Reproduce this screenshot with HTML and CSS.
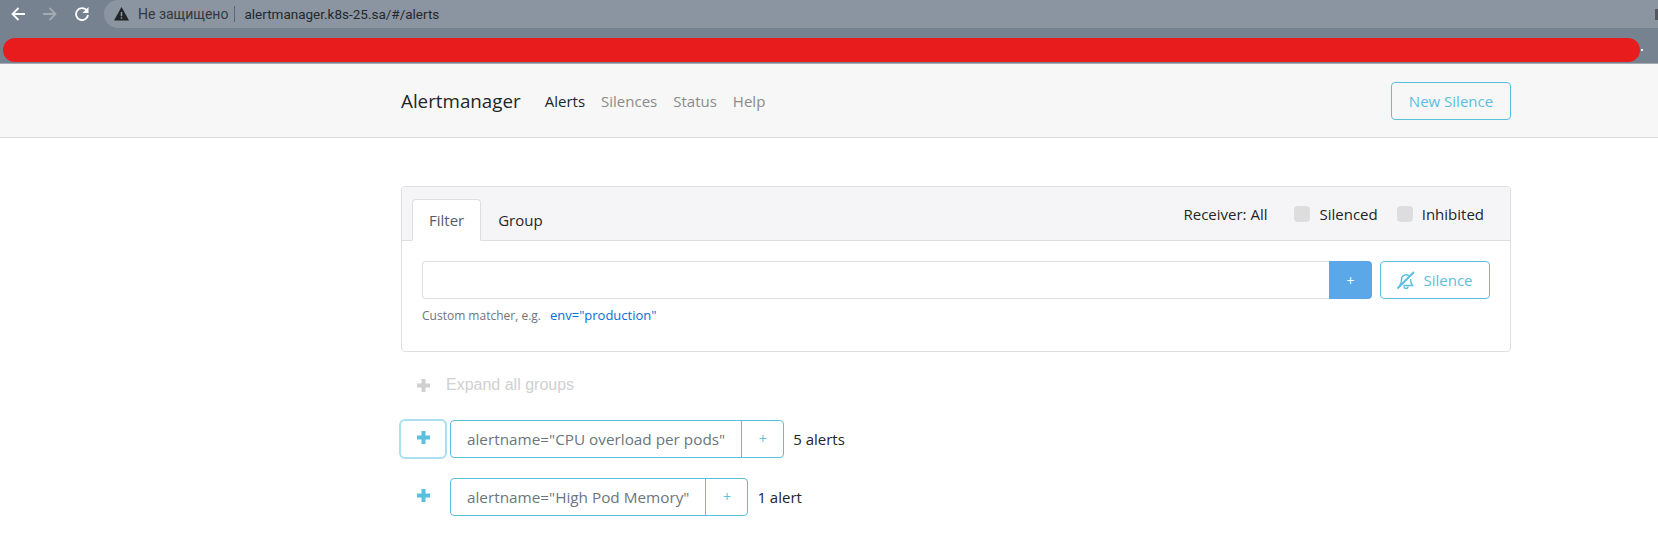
FILE: index.html
```html
<!DOCTYPE html>
<html lang="en">
<head>
  <meta charset="UTF-8" />
  <title>Alertmanager</title>
  <link rel="stylesheet" href="styles.css">
</head>
<body>
  <div class="chrome">
    <div class="chrome-top">
      <div class="chrome-nav">
        <svg class="chrome-icon" viewBox="0 0 14 14"><path d="M14 7H1.500M7.500 1L1.500 7l6 6" fill="none" stroke="#fff" stroke-width="1.800"/></svg>
        <svg class="chrome-icon" viewBox="0 0 14 14"><path d="M0 7h12.500M6.500 1l6 6-6 6" fill="none" stroke="#a3abb4" stroke-width="1.800"/></svg>
        <svg class="chrome-icon" viewBox="0 0 14 14"><path d="M11.600 3.200A6 6 0 1 0 13 8" fill="none" stroke="#fff" stroke-width="1.800"/><path d="M13.500 0v6H7.500z" fill="#fff"/></svg>
      </div>
      <div class="address">
        <svg class="warn" viewBox="0 0 15 14"><path d="M7.500 0l7.500 13.500H0z" fill="#202327"/><path d="M6.700 5h1.600v4.200H6.700zM6.700 10.200h1.600v1.500H6.700z" fill="#8b95a1"/></svg>
        <span class="not-secure">Не защищено</span>
        <span class="address-sep"></span>
        <span class="url">alertmanager.k8s-25.sa/#/alerts</span>
        <span class="ext-icon"></span>
      </div>
    </div>
    <div class="chrome-bookmarks">
      <div class="redacted"></div>
      <span class="redacted-dot"></span>
    </div>
  </div>

  <nav class="navbar">
    <div class="container navbar-inner">
      <span class="brand">Alertmanager</span>
      <a class="nav-link active">Alerts</a>
      <a class="nav-link">Silences</a>
      <a class="nav-link">Status</a>
      <a class="nav-link">Help</a>
      <button class="btn btn-outline new-silence">New Silence</button>
    </div>
  </nav>

  <main class="container content">
    <section class="card">
      <div class="card-header">
        <div class="tabs">
          <a class="tab active">Filter</a>
          <a class="tab">Group</a>
        </div>
        <div class="options">
          <span class="receiver">Receiver: All</span>
          <label class="check"><span class="check-box"></span>Silenced</label>
          <label class="check"><span class="check-box"></span>Inhibited</label>
        </div>
      </div>
      <div class="card-body">
        <div class="filter-row">
          <input class="filter-input" type="text" />
          <button class="btn-add">+</button>
          <button class="btn btn-outline silence-btn">
            <svg class="bell" viewBox="0 0 18 18"><path d="M2.500 14.500c1.500-1.500 2-3.500 2-6a4.500 4.500 0 0 1 7.500-3.500M13.500 8c0 3 .7 5 2 6.500H6.500M7 15.500a2 2 0 0 0 4 0" fill="none" stroke="#5bc0de" stroke-width="1.400"/><path d="M.5 17.500L17 1" fill="none" stroke="#5bc0de" stroke-width="2"/></svg>
            Silence
          </button>
        </div>
        <div class="hint">
          <span>Custom matcher, e.g.</span>
          <a class="hint-link">env="production"</a>
        </div>
      </div>
    </section>

    <div class="expand-all">
      <svg class="plus" viewBox="0 0 13 13"><path d="M6.500 0v13M0 6.500h13" stroke="currentColor" stroke-width="4"/></svg>
      <span class="expand-text">Expand all groups</span>
    </div>

    <div class="group">
      <button class="toggle focused"><svg class="plus" viewBox="0 0 13 13"><path d="M6.500 0v13M0 6.500h13" stroke="currentColor" stroke-width="4"/></svg></button>
      <div class="label-group">
        <span class="label-name">alertname="CPU overload per pods"</span>
        <span class="label-add">+</span>
      </div>
      <span class="count">5 alerts</span>
    </div>

    <div class="group">
      <button class="toggle"><svg class="plus" viewBox="0 0 13 13"><path d="M6.500 0v13M0 6.500h13" stroke="currentColor" stroke-width="4"/></svg></button>
      <div class="label-group">
        <span class="label-name">alertname="High Pod Memory"</span>
        <span class="label-add">+</span>
      </div>
      <span class="count">1 alert</span>
    </div>
  </main>
</body>
</html>
```
FILE: styles.css
```css
* {
  box-sizing: border-box;
}

body {
  margin: 0;
  font-family: "Open Sans", "Noto Sans", sans-serif;
  font-size: 15px;
  color: #212529;
  background: #fff;
  overflow: hidden;
}

.container {
  width: 1110px;
  margin-left: 401px;
}

/* browser bar */
.chrome {
  height: 64px;
  background: #76828f;
  border-bottom: 1px solid #a4abb3;
}

.chrome-top {
  display: flex;
  align-items: center;
  height: 28px;
}

.chrome-nav {
  display: flex;
  align-items: center;
  gap: 18px;
  width: 104px;
  padding-left: 11px;
}

.chrome-icon {
  width: 14px;
  height: 14px;
}

.address {
  display: flex;
  align-items: center;
  flex: 1;
  height: 28px;
  padding-left: 10px;
  border-radius: 14px 0 0 14px;
  background: #8b95a1;
  font-family: Roboto, sans-serif;
  font-size: 14px;
}

.warn {
  width: 15px;
  height: 14px;
  margin-right: 9px;
}

.not-secure {
  color: #33383e;
}

.address-sep {
  width: 1px;
  height: 16px;
  margin: 0 9px 0 6px;
  background: #5f6770;
}

.url {
  font-size: 13.500px;
  color: #24282c;
}

.ext-icon {
  width: 3px;
  height: 11px;
  margin-left: auto;
  background: #55595e;
}

.chrome-bookmarks {
  display: flex;
  align-items: center;
  padding: 10px 0 0 3px;
}

.redacted {
  width: 1637px;
  height: 24px;
  border-radius: 12px;
  background: #e81c1c;
}

.redacted-dot {
  width: 2px;
  height: 2px;
  margin-left: 1px;
  background: #f2f2f2;
}

/* navbar */
.navbar {
  height: 74px;
  background: #f7f7f7;
  border-bottom: 1px solid #d9d9d9;
}

.navbar-inner {
  display: flex;
  align-items: center;
  height: 73px;
}

.brand {
  margin-right: 24px;
  font-size: 18.800px;
  color: #212529;
}

.nav-link {
  margin-right: 16px;
  color: #8a8a8a;
}

.nav-link.active {
  color: #212529;
}

.btn {
  height: 38px;
  border-radius: 4px;
  background: transparent;
  font: inherit;
  color: #5bc0de;
}

.btn-outline {
  border: 1px solid #5bc0de;
}

.new-silence {
  width: 120px;
  margin-left: auto;
}

/* filter card */
.content {
  padding-top: 48px;
}

.card {
  height: 166px;
  border: 1px solid #dfdfdf;
  border-radius: 4px;
}

.card-header {
  display: flex;
  justify-content: space-between;
  height: 54px;
  padding: 12px 26px 0 10px;
  background: #f5f5f8;
  border-bottom: 1px solid #dfdfdf;
  border-radius: 4px 4px 0 0;
}

.tabs {
  display: flex;
}

.tab {
  display: flex;
  align-items: center;
  height: 42px;
  padding: 0 16px 1px;
  border: 1px solid transparent;
  border-radius: 4px 4px 0 0;
}

.tab.active {
  background: #fff;
  border-color: #dfdfdf #dfdfdf #fff;
  color: #555d64;
}

.options {
  display: flex;
  align-items: center;
  height: 30px;
}

.receiver {
  margin-right: 8px;
}

.check {
  display: flex;
  align-items: center;
  margin-left: 19px;
}

.check-box {
  width: 16px;
  height: 16px;
  margin-right: 9px;
  border-radius: 4px;
  background: #dddddd;
}

.card-body {
  padding: 20px;
}

.filter-row {
  display: flex;
  height: 38px;
}

.filter-input {
  flex: 1;
  height: 38px;
  border: 1px solid #dddddd;
  border-right: 0;
  border-radius: 4px 0 0 4px;
  outline: none;
}

.btn-add {
  width: 43px;
  height: 38px;
  border: 0;
  border-radius: 0 4px 4px 0;
  background: #5ba8e8;
  color: #fff;
  font: inherit;
  font-size: 14px;
}

.silence-btn {
  display: flex;
  align-items: center;
  justify-content: center;
  gap: 8px;
  width: 110px;
  margin-left: 8px;
}

.bell {
  width: 18px;
  height: 18px;
}

.hint {
  display: flex;
  gap: 9px;
  margin-top: 8px;
  font-size: 12px;
  color: #6c757d;
}

.hint-link {
  font-size: 13px;
  line-height: 16px;
  color: #0a6dd9;
}

/* alert groups */
.expand-all {
  display: flex;
  align-items: center;
  height: 24px;
  margin-top: 21px;
  padding-left: 16px;
  color: #d0d0d0;
}

.expand-text {
  margin-left: 16px;
  font-family: "Liberation Sans", sans-serif;
  font-size: 16px;
}

.plus {
  display: block;
  width: 13px;
  height: 13px;
}

.group {
  display: flex;
  align-items: center;
  height: 38px;
  margin-top: 20px;
}

.expand-all + .group {
  margin-top: 23px;
}

.toggle {
  display: flex;
  align-items: center;
  justify-content: center;
  flex: none;
  width: 48px;
  height: 40px;
  margin-left: -2px;
  margin-right: 3px;
  padding: 0 0 4px;
  border: 2px solid transparent;
  border-radius: 6px;
  background: transparent;
  color: #5bc0de;
}

.toggle.focused {
  border-color: #aadfef;
}

.label-group {
  display: flex;
  height: 38px;
  border: 1px solid #5bc0de;
  border-radius: 4px;
  font-size: 15.300px;
  color: #6c757d;
}

.label-name {
  display: flex;
  align-items: center;
  padding: 0 16px 1px;
}

.label-add {
  display: flex;
  align-items: center;
  justify-content: center;
  width: 42px;
  padding-bottom: 2px;
  border-left: 1px solid #5bc0de;
  color: #5bc0de;
  font-size: 14px;
}

.count {
  margin-left: 9px;
}
```
